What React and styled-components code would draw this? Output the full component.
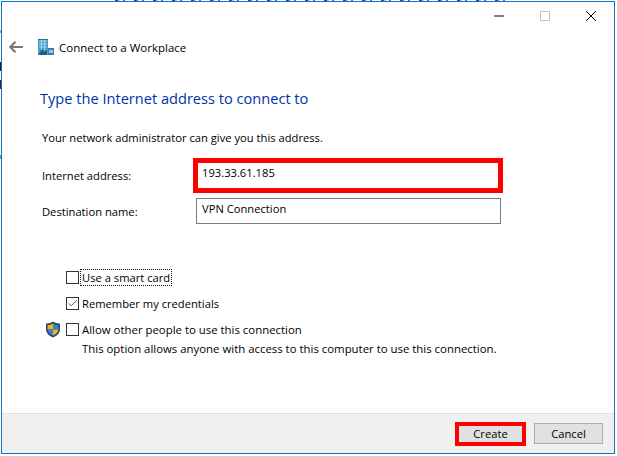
import styled, { createGlobalStyle } from 'styled-components';
import { Check } from 'lucide-react';

const GlobalStyle = createGlobalStyle`
  html, body { margin: 0; padding: 0; background: #fff; }
  body { font-family: "Open Sans", "Noto Sans", sans-serif; font-size: 11.2px; color: #000; }
`;

// the page behind the dialog only shows as a sliver along the top and left edge
const Backdrop = styled.div`
  width: 617px;
  height: 456px;
  padding: 1px 2px 2px 1px;
  box-sizing: border-box;
  background:
    repeating-linear-gradient(90deg, #fff 0 5px, #3a3a9a 5px 8px, #e9a6c8 8px 10px, #fff 10px 13px, #5a6ac0 13px 15px, #fff 15px 19px) top / 398px 1px no-repeat,
    linear-gradient(#e8913a, #e8913a) 0 30px / 1px 3px no-repeat,
    linear-gradient(#2a1418, #2a1418) 0 62px / 1px 9px no-repeat,
    linear-gradient(#5a1238, #5a1238) 0 80px / 1px 9px no-repeat,
    linear-gradient(#3cc04a, #3cc04a) 0 155px / 1px 4px no-repeat,
    #fff;
`;

const Window = styled.div`
  height: 100%;
  box-sizing: border-box;
  border: 1px solid #0a78c8;
  background: #fff;
  display: flex;
  flex-direction: column;
`;

const TitleBar = styled.div`
  display: flex;
  justify-content: flex-end;
  align-items: center;
  height: 27px;
  padding-right: 17px;
  gap: 34px;
`;

const WinControl = styled.svg`
  width: 12px;
  height: 12px;
  display: block;
`;

const NavRow = styled.div`
  display: flex;
  align-items: center;
  height: 32px;
  margin-top: 2px;
  padding-left: 7px;
`;

const BackIcon = styled.svg`
  width: 14px;
  height: 12px;
  margin-right: 15px;
`;

const NavTitle = styled.span`
  margin-left: 5px;
  font-size: 11.5px;
`;

const Heading = styled.h1`
  margin: 24px 0 0 38px;
  font-size: 14.6px;
  line-height: 22px;
  font-weight: 400;
  color: #0033aa;
`;

const Body = styled.div`
  flex: 1;
  display: flex;
  flex-direction: column;
  padding-left: 40px;
`;

const Hint = styled.p`
  margin: 21px 0 0;
  line-height: 16px;
`;

const Fields = styled.div`
  display: grid;
  grid-template-columns: 151px 310px;
  align-items: center;
  margin-top: 12px;
  row-gap: 5px;
`;

const FieldLabel = styled.label`
  font-size: 11.2px;
`;

const Field = styled.div`
  box-sizing: border-box;
  display: flex;
  align-items: flex-start;
  line-height: 16px;
  ${({ $marked }) => $marked
    ? 'height: 35px; width: 310px; border: 5px solid #f00; padding: 2px 4px;'
    : 'height: 26px; width: 305px; margin-left: 3px; border: 1px solid #7a7a7a; padding: 2px 5px;'}
`;

const Options = styled.div`
  display: flex;
  flex-direction: column;
  margin-top: 44px;
  gap: 8px;
`;

const OptionRow = styled.div`
  display: flex;
  align-items: center;
  gap: 2px;
  height: 18px;
  padding-left: ${({ $withIcon }) => ($withIcon ? 3 : 24)}px;
`;

const Box = styled.span`
  box-sizing: border-box;
  width: 13px;
  height: 13px;
  border: 1px solid #333;
  background: #fff;
  display: flex;
  align-items: center;
  justify-content: center;
  color: #444;
`;

const OptionText = styled.span`
  font-size: ${({ $size }) => $size || 11.2}px;
  line-height: 15px;
  padding: 0 1px;
  outline: ${({ $focused }) => ($focused ? '1px dotted #111' : 'none')};
`;

const Shield = styled.svg`
  width: 16px;
  height: 17px;
  margin-right: 3px;
`;

const OptionNote = styled.p`
  margin: 3px 0 0 40px;
  font-size: 11.4px;
  line-height: 16px;
`;

const Footer = styled.div`
  height: 40px;
  box-sizing: border-box;
  background: #f0f0f0;
  border-top: 1px solid #dfdfdf;
  display: flex;
  justify-content: flex-end;
  align-items: center;
  gap: 8px;
  padding-right: 11px;
`;

const Button = styled.button`
  box-sizing: border-box;
  font: inherit;
  color: #000;
  background: #e1e1e1;
  padding: 0;
  ${({ $marked }) => $marked
    ? 'width: 71px; height: 24px; border: 4px solid #f00;'
    : 'width: 69px; height: 21px; border: 1px solid #adadad;'}
`;

function BuildingIcon() {
  return (
    <svg width="16" height="17" viewBox="0 0 16 17">
      <rect x="0" y="0" width="10" height="16" fill="#4a9cc9" />
      <rect x="0" y="0" width="10" height="1" fill="#2b6f9e" />
      <path d="M1 2h8M1 5h8M1 8h8M3.5 1v10M6.5 1v10" stroke="#a6d8ee" strokeWidth="1" />
      <path d="M1 15l3-5 2 3 3-2v5H1z" fill="#1d5a85" />
      <rect x="10" y="9" width="6" height="7" fill="#3d7ea6" />
      <rect x="11" y="11" width="4" height="3" fill="#9cc5dc" />
    </svg>
  );
}

function ShieldIcon() {
  return (
    <Shield viewBox="0 0 16 17">
      <path d="M8 0.5C6 2 3.5 2.6 1 2.6V8c0 4 3 7 7 8.5 4-1.5 7-4.500 7-8.500V2.600C12.500 2.600 10 2 8 0.500z" fill="#27476e" />
      <path d="M8 2.500V8.500H2.600V4.200C4.600 4.100 6.500 3.500 8 2.500z" fill="#f4b21a" />
      <path d="M8 2.500c1.500 1 3.400 1.600 5.400 1.700V8.500H8z" fill="#2f86d8" />
      <path d="M2.600 8.500H8v6.200C5.200 13.500 3 11.300 2.600 8.500z" fill="#2f86d8" />
      <path d="M13.400 8.500H8v6.200c2.800-1.200 5-3.400 5.400-6.200z" fill="#f4b21a" />
    </Shield>
  );
}

export default function App() {
  return (
    <Backdrop>
      <GlobalStyle />
      <Window>
        <TitleBar>
          <WinControl viewBox="0 0 12 12">
            <path d="M1 6h10" stroke="#000" strokeWidth="1" />
          </WinControl>
          <WinControl viewBox="0 0 12 12">
            <rect x="1.500" y="1.500" width="9" height="9" fill="none" stroke="#c4c4c4" />
          </WinControl>
          <WinControl viewBox="0 0 12 12">
            <path d="M1 1l10 10M11 1L1 11" stroke="#000" strokeWidth="1" />
          </WinControl>
        </TitleBar>
        <NavRow>
          <BackIcon viewBox="0 0 14 12">
            <path d="M1 6h13M6.500 0.700L1.200 6l5.300 5.300" fill="none" stroke="#777" strokeWidth="2" />
          </BackIcon>
          <BuildingIcon />
          <NavTitle>Connect to a Workplace</NavTitle>
        </NavRow>
        <Heading>Type the Internet address to connect to</Heading>
        <Body>
          <Hint>Your network administrator can give you this address.</Hint>
          <Fields>
            <FieldLabel>Internet address:</FieldLabel>
            <Field $marked>193.33.61.185</Field>
            <FieldLabel>Destination name:</FieldLabel>
            <Field>VPN Connection</Field>
          </Fields>
          <Options>
            <OptionRow>
              <Box />
              <OptionText $focused>Use a smart card</OptionText>
            </OptionRow>
            <OptionRow>
              <Box><Check size={11} strokeWidth={2} /></Box>
              <OptionText>Remember my credentials</OptionText>
            </OptionRow>
            <div>
              <OptionRow $withIcon>
                <ShieldIcon />
                <Box />
                <OptionText $size={11.4}>Allow other people to use this connection</OptionText>
              </OptionRow>
              <OptionNote>This option allows anyone with access to this computer to use this connection.</OptionNote>
            </div>
          </Options>
        </Body>
        <Footer>
          <Button $marked>Create</Button>
          <Button>Cancel</Button>
        </Footer>
      </Window>
    </Backdrop>
  );
}
